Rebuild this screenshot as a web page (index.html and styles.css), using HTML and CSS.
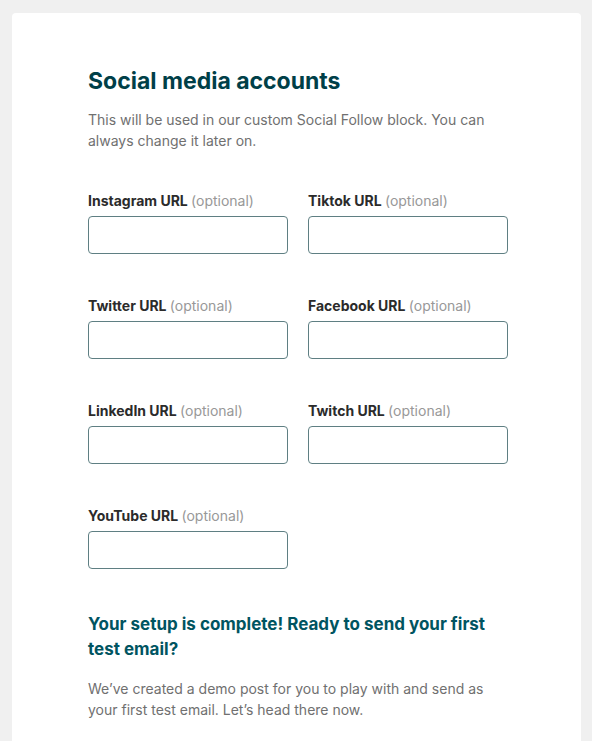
FILE: index.html
```html
<!DOCTYPE html>
<html>
<head>
<meta charset="utf-8">
<link rel="stylesheet" href="styles.css">
</head>
<body>
<div class="card">
  <h1 class="title">Social media accounts</h1>
  <p class="desc">This will be used in our custom Social Follow block. You can always change it later on.</p>
  <div class="grid">
    <div class="field"><label class="label">Instagram URL <span class="opt">(optional)</span></label><input class="input" type="text"></div>
    <div class="field"><label class="label">Tiktok URL <span class="opt">(optional)</span></label><input class="input" type="text"></div>
    <div class="field"><label class="label">Twitter URL <span class="opt">(optional)</span></label><input class="input" type="text"></div>
    <div class="field"><label class="label">Facebook URL <span class="opt">(optional)</span></label><input class="input" type="text"></div>
    <div class="field"><label class="label">LinkedIn URL <span class="opt">(optional)</span></label><input class="input" type="text"></div>
    <div class="field"><label class="label">Twitch URL <span class="opt">(optional)</span></label><input class="input" type="text"></div>
    <div class="field"><label class="label">YouTube URL <span class="opt">(optional)</span></label><input class="input" type="text"></div>
  </div>
  <h2 class="subtitle">Your setup is complete! Ready to send your first test email?</h2>
  <p class="desc">We’ve created a demo post for you to play with and send as your first test email. Let’s head there now.</p>
</div>
</body>
</html>
```
FILE: styles.css
```css
html, body {
  margin: 0;
  padding: 0;
  background: #f0f0f0;
  font-family: Inter, "Noto Sans", sans-serif;
}
body {
  padding: 13px 11px 0 12px;
}
.card {
  background: #fff;
  border-radius: 4px;
  padding: 52px 76px 40px 76px;
  min-height: 700px;
}
.title {
  margin: 0;
  font-size: 23px;
  line-height: 32px;
  font-weight: 700;
  color: #003f48;
}
.desc {
  margin: 12px 0 0 0;
  font-size: 14px;
  line-height: 21px;
  color: #707070;
  max-width: 400px;
}
.grid {
  margin-top: 40px;
  display: grid;
  grid-template-columns: 200px 200px;
  column-gap: 20px;
  row-gap: 42px;
}
.field {
  display: flex;
  flex-direction: column;
}
.label {
  font-size: 14px;
  line-height: 20px;
  font-weight: 700;
  color: #2b2b2b;
  margin-bottom: 5px;
}
.opt {
  font-weight: 400;
  color: #989898;
}
.input {
  box-sizing: border-box;
  width: 200px;
  height: 38px;
  border: 1px solid #5f7f83;
  border-radius: 4px;
  margin: 0;
  padding: 0 8px;
  background: #fff;
}
.subtitle {
  margin: 43px 0 0 0;
  font-size: 17px;
  line-height: 25px;
  font-weight: 700;
  color: #005461;
  max-width: 420px;
}
.subtitle + .desc {
  margin-top: 16px;
}
```
